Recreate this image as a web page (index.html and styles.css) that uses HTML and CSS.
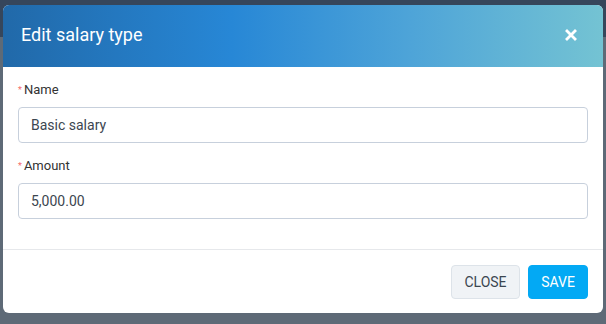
FILE: index.html
```html
<!doctype html>
<html lang="en">
  <head>
    <meta charset="UTF-8" />
    <meta name="viewport" content="width=device-width, initial-scale=1.0" />
    <title>Edit salary type</title>
    <link rel="stylesheet" href="styles.css">
  </head>
  <body>
    <div class="modal">
        <header class="modal-header">
            <h2>Edit salary type</h2>
            <button type="button" class="close-icon" aria-label="Close">
                <svg width="12" height="12" viewBox="0 0 12 12">
                    <path d="M2 2 L10 10 M10 2 L2 10" stroke="#fff" stroke-width="2.8" stroke-linecap="square" fill="none" />
                </svg>
            </button>
        </header>
        <form class="modal-body">
            <div class="form-group">
                <label for="name"><span class="required">*</span>Name</label>
                <input type="text" id="name" name="name" value="Basic salary">
            </div>
            <div class="form-group">
                <label for="amount"><span class="required">*</span>Amount</label>
                <input type="text" id="amount" name="amount" value="5,000.00">
            </div>
        </form>
        <footer class="modal-footer">
            <button type="button" id="close">Close</button>
            <button type="button" id="save">Save</button>
        </footer>
    </div>
  </body>
</html>
```

FILE: styles.css
```css
:root {
    font-family: Roboto, "Liberation Sans", Arial, sans-serif;
    color: #333;
}

* {
    box-sizing: border-box;
    margin: 0;
    padding: 0;
}

body {
    height: 324px;
    padding: 5px 3px;
    background: linear-gradient(to bottom, #36465b 37px, #5e6a77 37px);
    overflow: hidden;
}

.modal {
    display: flex;
    flex-direction: column;
    width: 600px;
    height: 308px;
    background-color: #fff;
    border-radius: 6px;
    overflow: hidden;
}

.modal-header {
    display: flex;
    align-items: center;
    justify-content: space-between;
    height: 62px;
    padding: 0 26px 3px 18px;
    background: linear-gradient(90deg, #2169a9 0%, #2787d6 38%, #4ea4d8 68%, #74c3d3 100%);
}

.modal-header h2 {
    font-size: 18px;
    font-weight: 400;
    line-height: 24px;
    color: #fff;
}

.close-icon {
    display: flex;
    background: none;
    border: none;
    cursor: pointer;
}

.modal-body {
    padding: 14px 15px 30px;
    border-bottom: 1px solid #e6e8eb;
}

.form-group + .form-group {
    margin-top: 14px;
}

label {
    display: block;
    font-size: 13px;
    line-height: 18px;
    margin-bottom: 8px;
    color: #333;
}

.required {
    display: inline-block;
    color: #f56c6c;
    font-size: 9px;
    margin-right: 2px;
    vertical-align: 1px;
}

input[type="text"] {
    display: block;
    width: 100%;
    height: 36px;
    padding: 0 12px;
    border: 1px solid #c7d0dc;
    border-radius: 4px;
    font-family: inherit;
    font-size: 14px;
    color: #3c4650;
    outline: none;
}

.modal-footer {
    display: flex;
    justify-content: flex-end;
    gap: 8px;
    padding: 15px 15px 0;
}

.modal-footer button {
    height: 34px;
    padding: 0 13px;
    border-radius: 4px;
    font-family: inherit;
    font-size: 14px;
    text-transform: uppercase;
    cursor: pointer;
}

button#close {
    width: 69px;
    padding: 0;
    background-color: #f0f3f6;
    border: 1px solid #dde3e9;
    color: #3b4650;
}

button#save {
    width: 60px;
    padding: 0;
    background-color: #03a9f4;
    border: 1px solid #03a9f4;
    color: #fff;
}
```
